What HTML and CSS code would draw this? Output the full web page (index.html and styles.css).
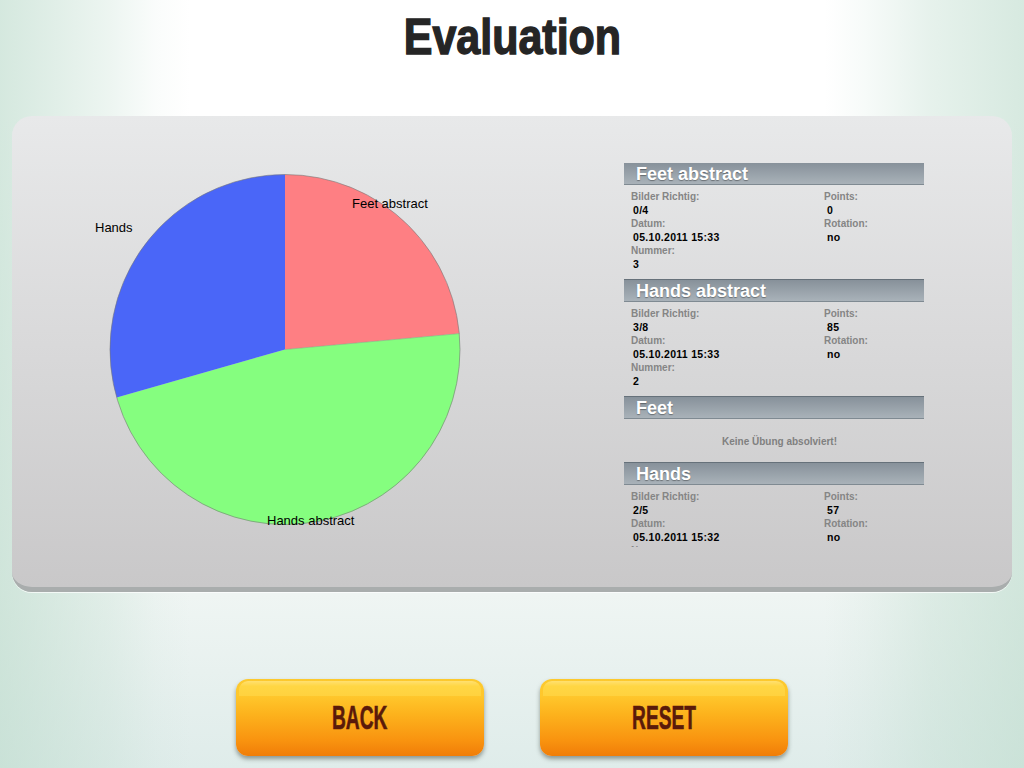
FILE: index.html
```html
<!DOCTYPE html>
<html lang="en">
<head>
    <meta charset="UTF-8">
    <title>Evaluation</title>
    <link rel="stylesheet" href="styles.css">
</head>
<body>
    <h1 class="title"><span>Evaluation</span></h1>

    <div class="panel">
        <div class="chart">
            <svg width="400" height="380" viewBox="90 165 400 380">
                <path fill="#fe7f83" d="M285 349.5 L285 174.5 A175 175 0 0 1 459.3 333.6 Z"/>
                <path fill="#85fe7f" d="M285 349.5 L459.3 333.6 A175 175 0 0 1 116.7 397.6 Z"/>
                <path fill="#4a66f8" d="M285 349.5 L116.7 397.6 A175 175 0 0 1 285 174.5 Z"/>
                <line class="spoke" x1="285" y1="349.5" x2="459.3" y2="333.6"/>
                <circle class="rim" cx="285" cy="349.5" r="175"/>
                <text x="352" y="208">Feet abstract</text>
                <text x="95" y="232">Hands</text>
                <text x="267" y="525">Hands abstract</text>
            </svg>
        </div>

        <div class="results">
            <div class="result">
                <h2>Feet abstract</h2>
                <div class="fields">
                    <div class="field"><label>Bilder Richtig:</label><b>0/4</b></div>
                    <div class="field"><label>Points:</label><b>0</b></div>
                    <div class="field"><label>Datum:</label><b>05.10.2011 15:33</b></div>
                    <div class="field"><label>Rotation:</label><b>no</b></div>
                    <div class="field"><label>Nummer:</label><b>3</b></div>
                </div>
            </div>
            <div class="result">
                <h2>Hands abstract</h2>
                <div class="fields">
                    <div class="field"><label>Bilder Richtig:</label><b>3/8</b></div>
                    <div class="field"><label>Points:</label><b>85</b></div>
                    <div class="field"><label>Datum:</label><b>05.10.2011 15:33</b></div>
                    <div class="field"><label>Rotation:</label><b>no</b></div>
                    <div class="field"><label>Nummer:</label><b>2</b></div>
                </div>
            </div>
            <div class="result">
                <h2>Feet</h2>
                <p class="empty">Keine Übung absolviert!</p>
            </div>
            <div class="result">
                <h2>Hands</h2>
                <div class="fields">
                    <div class="field"><label>Bilder Richtig:</label><b>2/5</b></div>
                    <div class="field"><label>Points:</label><b>57</b></div>
                    <div class="field"><label>Datum:</label><b>05.10.2011 15:32</b></div>
                    <div class="field"><label>Rotation:</label><b>no</b></div>
                    <div class="field"><label>Nummer:</label></div>
                </div>
            </div>
        </div>
    </div>

    <div class="buttons">
        <button><span>BACK</span></button>
        <button><span>RESET</span></button>
    </div>
</body>
</html>
```

FILE: styles.css
```css
body {
    margin: 0;
    height: 768px;
    overflow: hidden;
    font-family: "Liberation Sans", Arial, sans-serif;
    background:
        linear-gradient(90deg, rgba(190,220,205,0.65) 0, rgba(190,220,205,0.45) 60px, rgba(190,220,205,0.28) 110px, rgba(190,220,205,0.08) 155px, rgba(190,220,205,0) 190px, rgba(190,220,205,0) 825px, rgba(190,220,205,0.12) 865px, rgba(190,220,205,0.38) 930px, rgba(190,220,205,0.62) 100%),
        linear-gradient(180deg, #fff 0, #fff 116px, #eff5f3 595px, #dfecea 768px);
}
.title {
    margin: 0;
    height: 116px;
    padding-top: 8px;
    box-sizing: border-box;
    text-align: center;
    font-size: 50px;
    line-height: 58px;
    font-weight: bold;
    color: #252525;
}
.title span {
    display: inline-block;
    transform: scaleX(0.86);
    -webkit-text-stroke: 1.4px #252525;
}
.panel {
    display: flex;
    align-items: flex-start;
    box-sizing: border-box;
    height: 476px;
    margin: 0 12px;
    padding-top: 47px;
    border-radius: 20px;
    border-bottom: 5px solid #a9adad;
    background: linear-gradient(180deg, #e8e9ea 0%, #c9c8c9 100%);
    box-shadow: 0 1px 0 rgba(255,255,255,0.7);
}
.chart {
    width: 534px;
    margin-left: 78px;
    margin-top: 2px;
}
.chart svg {
    display: block;
}
.rim {
    fill: none;
    stroke: #777;
    stroke-width: 0.6;
}
.spoke {
    stroke: #8a9a80;
    stroke-width: 0.5;
}
.chart text {
    font-size: 13px;
    fill: #000;
}
.results {
    width: 300px;
    height: 384px;
    overflow: hidden;
}
.result h2 {
    margin: 0;
    height: 23px;
    box-sizing: border-box;
    padding-left: 12px;
    border-top: 1px solid #66717a;
    border-bottom: 1px solid #7f8a92;
    background: linear-gradient(180deg, #87919a 0%, #a9b2b9 100%);
    color: #fff;
    font-size: 18px;
    line-height: 22px;
    font-weight: bold;
    text-shadow: 0 1px 1px rgba(0,0,0,0.35);
}
.result:first-child h2 {
    height: 22px;
    border-top: none;
}
.fields {
    display: grid;
    grid-template-columns: 193px 1fr;
    align-content: start;
    box-sizing: border-box;
    height: 94px;
    padding: 5px 0 0 7px;
}
.field {
    height: 27px;
}
.field label {
    display: block;
    height: 14px;
    font-size: 10px;
    line-height: 14px;
    font-weight: bold;
    color: #858585;
}
.field b {
    display: block;
    height: 13px;
    padding-left: 2px;
    font-size: 10.5px;
    line-height: 13px;
    letter-spacing: 0.3px;
    color: #000;
}
.field:nth-child(even) b {
    padding-left: 3px;
}
.empty {
    margin: 0;
    height: 43px;
    padding-left: 11px;
    text-align: center;
    font-size: 10px;
    line-height: 46px;
    font-weight: bold;
    color: #808080;
}
.buttons {
    display: flex;
    justify-content: center;
    gap: 56px;
    margin-top: 87px;
}
.buttons button {
    position: relative;
    width: 248px;
    height: 77px;
    padding: 0;
    border: none;
    border-radius: 12px;
    font-family: "Liberation Sans", sans-serif;
    font-size: 33px;
    font-weight: bold;
    color: #5a1a0a;
    background: linear-gradient(180deg, #fcc92e 0%, #ffc72c 22%, #fdb31d 45%, #f9930f 80%, #f07d08 100%);
    box-shadow: 0 3px 4px rgba(60,70,60,0.5);
}
.buttons button::before {
    content: "";
    position: absolute;
    top: 2px;
    left: 3px;
    right: 3px;
    height: 15px;
    border-radius: 9px 9px 0 0;
    background: linear-gradient(180deg, #ffe070 0%, #ffd643 35%, #ffd23f 100%);
}
.buttons button span {
    position: relative;
    display: inline-block;
    transform: scaleX(0.58);
    -webkit-text-stroke: 0.6px #5a1a0a;
}
```
